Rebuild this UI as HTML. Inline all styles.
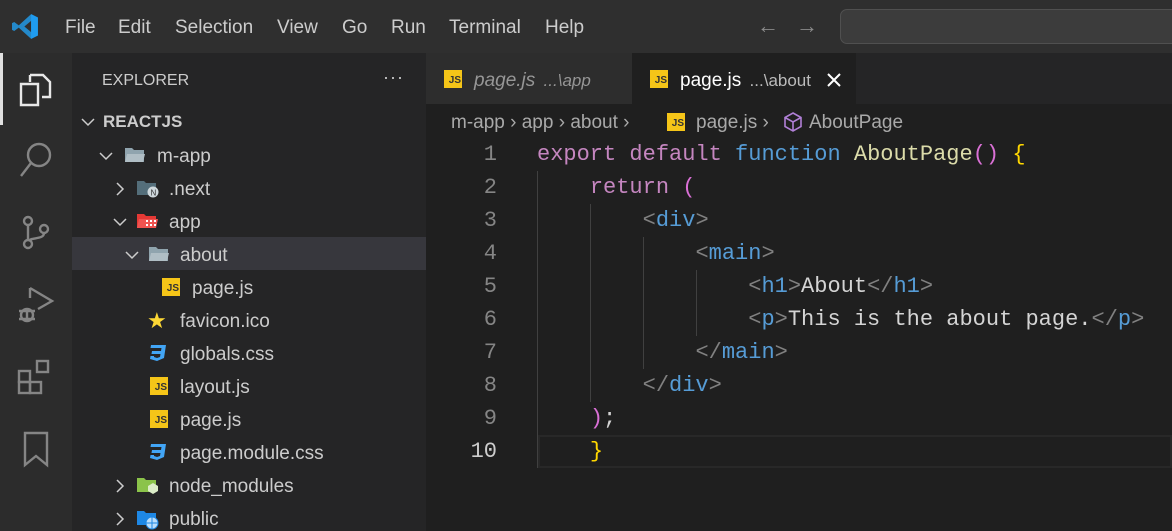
<!DOCTYPE html>
<html><head><meta charset="utf-8"><style>
*{margin:0;padding:0;box-sizing:border-box}
body{width:1172px;height:531px;overflow:hidden;background:#1f1f1f;font-family:"Liberation Sans",sans-serif;position:relative}
.abs{position:absolute}
#title{left:0;top:0;width:1172px;height:53px;background:#2f2f2f}
.menu{top:17px;font-size:19px;color:#cccccc}
#act{left:0;top:53px;width:72px;height:478px;background:#2c2c2c}
#side{left:72px;top:53px;width:354px;height:478px;background:#252526}
.row{position:absolute;left:72px;width:354px;height:33px}
.js{position:absolute;width:18px;height:18px;background:#f5c518;color:#333;font-size:10px;font-weight:bold;line-height:10px;text-align:right;padding:6px 1px 0 0;top:8px}
#tabs{left:426px;top:53px;width:746px;height:51px;background:#252526}
.code{position:absolute;left:537px;font-family:"Liberation Mono",monospace;font-size:22px;white-space:pre;color:#d4d4d4;line-height:33px}
.ln{position:absolute;width:70px;left:427px;text-align:right;font-family:"Liberation Mono",monospace;font-size:22px;color:#858585;line-height:33px}
.k{color:#c586c0}.b{color:#569cd6}.y{color:#dcdcaa}.g{color:#808080}.gold{color:#ffd700}.pk{color:#da70d6}
.guide{position:absolute;width:1px;background:#404040}
.tt{position:absolute;font-size:19px;color:#cccccc}
</style></head><body>
<div id="title" class="abs"></div>
<svg class="abs" style="left:12px;top:13px" width="27" height="27" viewBox="0 0 24 24"><path d="M17 1 L23 4 V20 L17 23 L6 13 L2 16 L0 15 V9 L2 8 L6 11 Z M17 7 L11 12 L17 17 Z" fill="#2489ca"/><path d="M17 1 L23 4 V20 L17 23Z" fill="#1f9cf0"/></svg>
<div class="abs menu" style="left:65px">File</div>
<div class="abs menu" style="left:118px">Edit</div>
<div class="abs menu" style="left:175px">Selection</div>
<div class="abs menu" style="left:277px">View</div>
<div class="abs menu" style="left:342px">Go</div>
<div class="abs menu" style="left:391px">Run</div>
<div class="abs menu" style="left:449px">Terminal</div>
<div class="abs menu" style="left:545px">Help</div>
<div class="abs" style="left:757px;top:13px;font-size:22px;color:#8a8a8a">←</div>
<div class="abs" style="left:796px;top:13px;font-size:22px;color:#8a8a8a">→</div>
<div class="abs" style="left:840px;top:9px;width:340px;height:35px;background:#3c3c3c;border:1px solid #505050;border-radius:7px"></div>

<div id="act" class="abs"></div>
<div class="abs" style="left:0;top:53px;width:3px;height:72px;background:#e0e0e0"></div>
<svg class="abs" style="left:18px;top:70px" width="36" height="38" viewBox="0 0 36 38" fill="none" stroke="#e8e8e8" stroke-width="2.4"><path d="M12 5 H25 L32 12 V27 H24"/><path d="M12 5 V12"/><path d="M3 14 H20 V35 H3 Z"/></svg>
<svg class="abs" style="left:18px;top:140px" width="36" height="40" viewBox="0 0 36 40" fill="none" stroke="#858585" stroke-width="2.4"><circle cx="21" cy="15" r="11"/><path d="M13 23 L3 36"/></svg>
<svg class="abs" style="left:18px;top:213px" width="36" height="40" viewBox="0 0 36 40" fill="none" stroke="#858585" stroke-width="2.4"><circle cx="10" cy="8" r="4"/><circle cx="10" cy="31" r="4"/><circle cx="26" cy="16" r="4"/><path d="M10 12 V27 M26 20 C26 27 12 24 11 28"/></svg>
<svg class="abs" style="left:16px;top:284px" width="40" height="44" viewBox="0 0 40 44" fill="none" stroke="#858585" stroke-width="2.4"><path d="M14 4 L36 17 L22 25"/><path d="M14 4 V14"/><circle cx="11" cy="31" r="6"/><path d="M3 27 H19 M3 35 H19 M11 25 V37"/></svg>
<svg class="abs" style="left:16px;top:358px" width="40" height="40" viewBox="0 0 40 40" fill="none" stroke="#858585" stroke-width="2.4"><rect x="3" y="13" width="11" height="11"/><rect x="3" y="24" width="11" height="11"/><rect x="14" y="24" width="11" height="11"/><rect x="21" y="3" width="11" height="11"/></svg>
<svg class="abs" style="left:22px;top:430px" width="30" height="40" viewBox="0 0 30 40" fill="none" stroke="#858585" stroke-width="2.4"><path d="M3 3 H25 V35 L14 26 L3 35 Z"/></svg>

<div id="side" class="abs"></div>
<div class="abs" style="left:102px;top:72px;font-size:16px;color:#cccccc">EXPLORER</div>
<div class="abs" style="left:383px;top:67px;font-size:18px;color:#cccccc;letter-spacing:1px">···</div>
<svg class="abs" style="left:80px;top:114px" width="16" height="16" viewBox="0 0 16 16" fill="none" stroke="#ccc" stroke-width="1.5"><path d="M2 5 L8 11 L14 5"/></svg>
<div class="abs" style="left:103px;top:112px;font-size:17px;font-weight:bold;color:#cccccc">REACTJS</div>

<div class="row" style="top:237px;background:#37373d"></div>

<svg class="abs" style="left:98px;top:148px" width="16" height="16" viewBox="0 0 16 16" fill="none" stroke="#ccc" stroke-width="1.5"><path d="M2 5 L8 11 L14 5"/></svg>
<svg class="abs" style="left:124px;top:146px" width="22" height="18" viewBox="0 0 22 18"><path d="M1 2 H8 L10 4 H20 V16 H1Z" fill="#90a4ae"/><path d="M3 8 H21 L19 16 H1Z" fill="#b0bec5"/></svg>
<div class="tt" style="left:157px;top:146px">m-app</div>

<svg class="abs" style="left:112px;top:181px" width="16" height="16" viewBox="0 0 16 16" fill="none" stroke="#ccc" stroke-width="1.5"><path d="M5 2 L11 8 L5 14"/></svg>
<svg class="abs" style="left:136px;top:179px" width="24" height="20" viewBox="0 0 24 20"><path d="M1 2 H8 L10 4 H20 V16 H1Z" fill="#546e7a"/><circle cx="17" cy="13" r="5.5" fill="#cfd8dc"/><text x="14.5" y="16.5" font-size="8" fill="#333" font-family="Liberation Sans">N</text></svg>
<div class="tt" style="left:169px;top:179px">.next</div>

<svg class="abs" style="left:112px;top:214px" width="16" height="16" viewBox="0 0 16 16" fill="none" stroke="#ccc" stroke-width="1.5"><path d="M2 5 L8 11 L14 5"/></svg>
<svg class="abs" style="left:136px;top:212px" width="24" height="20" viewBox="0 0 24 20"><path d="M1 2 H8 L10 4 H20 V16 H1Z" fill="#e53935"/><path d="M3 7 H22 L20 16 H1Z" fill="#ef5350"/><g fill="#fff"><rect x="10" y="8" width="2" height="2"/><rect x="14" y="8" width="2" height="2"/><rect x="18" y="8" width="2" height="2"/><rect x="10" y="12" width="2" height="2"/><rect x="14" y="12" width="2" height="2"/><rect x="18" y="12" width="2" height="2"/></g></svg>
<div class="tt" style="left:169px;top:212px">app</div>

<svg class="abs" style="left:124px;top:247px" width="16" height="16" viewBox="0 0 16 16" fill="none" stroke="#ccc" stroke-width="1.5"><path d="M2 5 L8 11 L14 5"/></svg>
<svg class="abs" style="left:148px;top:245px" width="22" height="18" viewBox="0 0 22 18"><path d="M1 2 H8 L10 4 H20 V16 H1Z" fill="#90a4ae"/><path d="M3 8 H21 L19 16 H1Z" fill="#b0bec5"/></svg>
<div class="tt" style="left:180px;top:245px">about</div>

<div class="js" style="left:162px;top:278px">JS</div>
<div class="tt" style="left:192px;top:278px">page.js</div>

<div class="abs" style="left:147px;top:308px;font-size:22px;color:#fdd835">★</div>
<div class="tt" style="left:180px;top:311px">favicon.ico</div>

<svg class="abs" style="left:148px;top:344px" width="20" height="18" viewBox="0 0 20 18"><path d="M3 1 H18 L16 14 L9 17 L2 15 L2.5 12 H6 L6 13 L9 14 L12 13 L12.5 10 H3.5 L4 7 H13 L13.5 4 H2.5Z" fill="#42a5f5"/></svg>
<div class="tt" style="left:180px;top:344px">globals.css</div>

<div class="js" style="left:150px;top:377px">JS</div>
<div class="tt" style="left:180px;top:377px">layout.js</div>
<div class="js" style="left:150px;top:410px">JS</div>
<div class="tt" style="left:180px;top:410px">page.js</div>

<svg class="abs" style="left:148px;top:443px" width="20" height="18" viewBox="0 0 20 18"><path d="M3 1 H18 L16 14 L9 17 L2 15 L2.5 12 H6 L6 13 L9 14 L12 13 L12.5 10 H3.5 L4 7 H13 L13.5 4 H2.5Z" fill="#42a5f5"/></svg>
<div class="tt" style="left:180px;top:443px">page.module.css</div>

<svg class="abs" style="left:112px;top:478px" width="16" height="16" viewBox="0 0 16 16" fill="none" stroke="#ccc" stroke-width="1.5"><path d="M5 2 L11 8 L5 14"/></svg>
<svg class="abs" style="left:136px;top:476px" width="24" height="20" viewBox="0 0 24 20"><path d="M1 2 H8 L10 4 H20 V16 H1Z" fill="#8bc34a"/><path d="M17 7 L22 10 V15 L17 18 L12 15 V10Z" fill="#dcedc8"/></svg>
<div class="tt" style="left:169px;top:476px">node_modules</div>

<svg class="abs" style="left:112px;top:511px" width="16" height="16" viewBox="0 0 16 16" fill="none" stroke="#ccc" stroke-width="1.5"><path d="M5 2 L11 8 L5 14"/></svg>
<svg class="abs" style="left:136px;top:509px" width="24" height="22" viewBox="0 0 24 22"><path d="M1 2 H8 L10 4 H20 V16 H1Z" fill="#1e88e5"/><circle cx="16" cy="14" r="6" fill="#bbdefb" stroke="#1e88e5"/><path d="M10 14 H22 M16 8 V20" stroke="#1e88e5"/></svg>
<div class="tt" style="left:169px;top:509px">public</div>

<div id="tabs" class="abs"></div>
<div class="abs" style="left:426px;top:53px;width:206px;height:51px;background:#2d2d2d"></div>
<div class="abs" style="left:632px;top:53px;width:224px;height:51px;background:#1f1f1f"></div>
<div class="js" style="left:444px;top:70px">JS</div>
<div class="abs" style="left:474px;top:70px;font-size:19px;color:#969696;font-style:italic">page.js <span style="font-size:17px;margin-left:3px">...\app</span></div>
<div class="js" style="left:650px;top:70px">JS</div>
<div class="abs" style="left:680px;top:70px;font-size:19px;color:#fff">page.js <span style="font-size:17px;color:#bbb;margin-left:3px">...\about</span></div>
<svg class="abs" style="left:826px;top:72px" width="16" height="16" viewBox="0 0 16 16" stroke="#fff" stroke-width="2"><path d="M2 2 L14 14 M14 2 L2 14"/></svg>

<div class="abs" style="left:451px;top:112px;font-size:19px;color:#a9a9a9;white-space:pre">m-app › app › about ›</div>
<div class="js" style="left:667px;top:113px">JS</div>
<div class="abs" style="left:696px;top:112px;font-size:19px;color:#a9a9a9">page.js ›</div>
<svg class="abs" style="left:782px;top:111px" width="22" height="22" viewBox="0 0 22 22" fill="none" stroke="#b180d7" stroke-width="1.6"><path d="M11 2 L19 6.5 V15.5 L11 20 L3 15.5 V6.5Z M3 6.5 L11 11 L19 6.5 M11 11 V20"/></svg>
<div class="abs" style="left:809px;top:112px;font-size:19px;color:#a9a9a9">AboutPage</div>

<div class="abs" style="left:538px;top:435px;width:634px;height:33px;border:2px solid #282828"></div>
<div class="guide" style="left:537px;top:171px;height:297px"></div>
<div class="guide" style="left:590px;top:204px;height:198px"></div>
<div class="guide" style="left:643px;top:237px;height:132px"></div>
<div class="guide" style="left:696px;top:270px;height:66px"></div>

<div class="ln" style="top:138px">1</div>
<div class="ln" style="top:171px">2</div>
<div class="ln" style="top:204px">3</div>
<div class="ln" style="top:237px">4</div>
<div class="ln" style="top:270px">5</div>
<div class="ln" style="top:303px">6</div>
<div class="ln" style="top:336px">7</div>
<div class="ln" style="top:369px">8</div>
<div class="ln" style="top:402px">9</div>
<div class="ln" style="top:435px;color:#ccc">10</div>

<div class="code" style="top:138px"><span class="k">export default</span> <span class="b">function</span> <span class="y">AboutPage</span><span class="pk">()</span> <span class="gold">{</span></div>
<div class="code" style="top:171px">    <span class="k">return</span> <span class="pk">(</span></div>
<div class="code" style="top:204px">        <span class="g">&lt;</span><span class="b">div</span><span class="g">&gt;</span></div>
<div class="code" style="top:237px">            <span class="g">&lt;</span><span class="b">main</span><span class="g">&gt;</span></div>
<div class="code" style="top:270px">                <span class="g">&lt;</span><span class="b">h1</span><span class="g">&gt;</span>About<span class="g">&lt;/</span><span class="b">h1</span><span class="g">&gt;</span></div>
<div class="code" style="top:303px">                <span class="g">&lt;</span><span class="b">p</span><span class="g">&gt;</span>This is the about page.<span class="g">&lt;/</span><span class="b">p</span><span class="g">&gt;</span></div>
<div class="code" style="top:336px">            <span class="g">&lt;/</span><span class="b">main</span><span class="g">&gt;</span></div>
<div class="code" style="top:369px">        <span class="g">&lt;/</span><span class="b">div</span><span class="g">&gt;</span></div>
<div class="code" style="top:402px">    <span class="pk">)</span>;</div>
<div class="code" style="top:435px">    <span class="gold">}</span></div>
</body></html>
